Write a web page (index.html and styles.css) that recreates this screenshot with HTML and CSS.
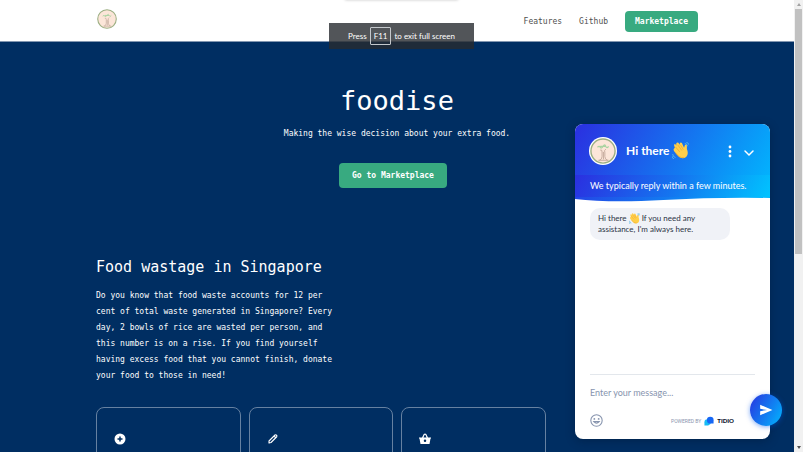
FILE: index.html
```html
<!DOCTYPE html>
<html lang="en">
<head>
<meta charset="utf-8">
<meta name="viewport" content="width=device-width, initial-scale=1">
<title>foodise</title>
<link rel="stylesheet" href="styles.css">
</head>
<body>
<svg class="defs" aria-hidden="true">
  <symbol id="logo" viewBox="0 0 28 28">
    <circle cx="14" cy="14" r="13" fill="#fce6d9" stroke="#9caf83" stroke-width="1.5"/>
    <path d="M8 10q2-2 3 0t3-1 3 0 3 0M11 9h6" fill="none" stroke="#a9d3a0" stroke-width="1.3"/>
    <path d="M11 13q2-1 2 2v5q0 3-3 4M17 12q-2 1-1 4v4q0 3 3 4M9 24h11M14.500 15v8" fill="none" stroke="#c4aa9c" stroke-width="1"/>
  </symbol>
  <symbol id="wave" viewBox="0 0 24 24">
    <path d="M4 8 3 5q-.5-2 1.500-2.200L6 5 6 2q1-2 3-1l2 3 0-2q1-2 3-.5L17 8l1-3q1-2 3-1l0 6q3 7-1 11-6 4-11-1L3 13q-2-3 1-5Z" fill="#ffcf4a"/>
    <path d="m5 7 6 7M8 4l6 8M12 4l4 7M5 15q5 8 12 7" fill="none" stroke="#eea52c" stroke-width="1"/>
    <path d="M18 2q3 0 4 4M20 0q3 1 4 4M1 17q0 4 4 5M0 20q0 3 3 4" fill="none" stroke="#55b5e8" stroke-width="1.3"/>
  </symbol>
</svg>
<div class="window">
  <div class="page">
    <header class="topbar">
      <div class="container topbar-row">
        <a href="#" class="brand" aria-label="foodise home"><svg><use href="#logo"/></svg></a>
        <nav class="nav">
          <a href="#features">Features</a>
          <a href="#github">Github</a>
          <a href="#market" class="btn">Marketplace</a>
        </nav>
      </div>
    </header>
    <main class="container">
      <section class="hero">
        <h1>foodise</h1>
        <p>Making the wise decision about your extra food.</p>
        <a href="#market" class="btn btn-hero">Go to Marketplace</a>
      </section>
      <section class="about" id="features">
        <h2>Food wastage in Singapore</h2>
        <p>Do you know that food waste accounts for 12 per cent of total waste generated in Singapore? Every day, 2 bowls of rice are wasted per person, and this number is on a rise. If you find yourself having excess food that you cannot finish, donate your food to those in need!</p>
        <div class="cards">
          <article class="card"><svg viewBox="0 0 24 24"><path fill="#fff" fill-rule="evenodd" d="M12 1a11 11 0 1 0 0 22 11 11 0 0 0 0-22Zm-1.500 6h3v3.500H17v3h-3.500V17h-3v-3.500H7v-3h3.500Z"/></svg></article>
          <article class="card"><svg viewBox="0 0 24 24"><path fill="none" stroke="#fff" stroke-width="2.200" stroke-linejoin="round" d="M4 20v-4L16 4q1.500-1 3 .5t.5 3L8 19ZM14 6l4 4"/></svg></article>
          <article class="card"><svg viewBox="0 0 24 24"><path fill="#fff" fill-rule="evenodd" d="M6 9 9.500 2q2.500-2 5 0L18 9h6v2h-1l-2 11H3L1 11H0V9Zm3 0h6l-2-5q-1-1-2 0Zm3 4a2.500 2.500 0 1 0 0 5 2.500 2.500 0 0 0 0-5Z"/></svg></article>
        </div>
      </section>
    </main>
  </div>
  <div class="scrollbar" aria-hidden="true"><i class="arrow up"></i><i class="thumb"></i><i class="arrow down"></i></div>
</div>
<div class="edge-shadow"></div>
<div class="toast" role="status">Press <kbd>F11</kbd> to exit full screen</div>
<aside class="chat" aria-label="Chat">
  <div class="chat-head">
    <div class="chat-title">
      <span class="avatar"><svg><use href="#logo"/></svg></span>
      <h3>Hi there <svg class="wave"><use href="#wave"/></svg></h3>
      <button type="button" aria-label="Options"><svg viewBox="0 0 16 16"><g fill="#fff"><circle cx="8" cy="4" r="1.400"/><circle cx="8" cy="8.500" r="1.400"/><circle cx="8" cy="13" r="1.400"/></g></svg></button>
      <button type="button" aria-label="Minimize"><svg viewBox="0 0 16 16"><path d="m4 8 4 4 4-4" fill="none" stroke="#fff" stroke-width="1.500" stroke-linecap="round"/></svg></button>
    </div>
    <p class="chat-note">We typically reply within a few minutes.</p>
    <svg class="curve" viewBox="0 0 194 6" preserveAspectRatio="none"><path d="M0 2q35 4 88 1T194 1v5H0Z" fill="#fff"/></svg>
  </div>
  <div class="chat-log">
    <p class="bubble">Hi there <svg class="wave"><use href="#wave"/></svg> If you need any<br>assistance, I'm always here.</p>
  </div>
  <form class="chat-form">
    <input type="text" aria-label="Message" placeholder="Enter your message...">
    <div class="chat-foot">
      <button type="button" aria-label="Emoji"><svg viewBox="0 0 24 24"><g fill="none" stroke="#8794ae" stroke-width="2"><circle cx="12" cy="12" r="10.500"/><path d="M7 14q5 6 10 0Z"/></g><g fill="#8794ae"><circle cx="8" cy="9" r="1.700"/><circle cx="16" cy="9" r="1.700"/></g></svg></button>
      <a href="#tidio" class="powered">POWERED BY <svg viewBox="0 0 24 24"><path d="M1 23V15q0-7 7-7h3q6 1 6 7t-7 8Z" fill="#18bcf5"/><path d="M7 10q0-8 8-8t8 8v8h-8q-8 0-8-8Z" fill="#1667f5"/></svg><strong>TIDIO</strong></a>
    </div>
    <button type="submit" class="send" aria-label="Send"><svg viewBox="0 0 24 24"><path fill="#fff" d="M2 3 23 12 2 21v-7l12-2-12-2Z"/></svg></button>
  </form>
</aside>
</body>
</html>
```
FILE: styles.css
```css
* { box-sizing: border-box; }
html, body { margin: 0; height: 100%; overflow: hidden; }
body { font-family: "DejaVu Sans Mono", monospace; font-size: 8px; color: #fff; background: #002e62; }
h1, h2, h3, p { margin: 0; font-weight: 400; }
a { color: inherit; text-decoration: none; }
svg { display: block; }
button { border: 0; padding: 0; background: none; cursor: pointer; }
.defs { position: absolute; width: 0; height: 0; }

.window { display: flex; height: 100%; }
.page { flex: 1; min-width: 0; overflow: hidden; }
.container { margin: 0 96px; }

.topbar { background: #fff; color: #505050; border-bottom: 1px solid #8296b0; }
.topbar-row { display: flex; justify-content: space-between; align-items: center; height: 41px; }
.brand { padding: 0 1px 4px; }
.brand svg { width: 20px; height: 20px; }
.nav { display: flex; align-items: center; gap: 17px; padding-top: 1px; }
.btn { display: inline-block; border-radius: 4px; background: #38aa80; color: #fff; font-weight: 700; line-height: 21px; padding: 0 10px; }
.btn-hero { line-height: 25px; padding: 0 13px; margin-right: 8px; }

.hero { text-align: center; padding-top: 39px; }
.hero h1 { font-size: 27px; line-height: 40px; }
.hero p { line-height: 16px; margin: 5px 0 21px; }
.about { padding-top: 67px; }
.about h2 { font-size: 15px; line-height: 24px; margin-bottom: 9px; }
.about p { width: 41%; line-height: 16px; }
.cards { display: grid; grid-template-columns: repeat(4, 1fr); gap: 8px; margin-top: 23px; }
.card { border: 1px solid #6681a1; border-radius: 8px; height: 140px; padding: 25px 17px; }
.card svg { width: 12px; height: 12px; }

.scrollbar { display: flex; flex-direction: column; align-items: center; width: 9px; background: #f1f1f1; padding: 3px 0; gap: 3px; }
.thumb { width: 7px; height: 55%; background: #c1c1c1; }
.arrow { border: 2px solid transparent; }
.up { border-top: 0; border-bottom: 3px solid #a3a3a3; }
.down { border-bottom: 0; border-top: 3px solid #505050; margin-top: auto; }

.edge-shadow { position: absolute; top: -6px; left: 43%; width: 14%; height: 6px; box-shadow: 0 0 3px rgba(0, 0, 0, .25); }
.toast { position: absolute; top: 23px; left: 41%; width: 18%; height: 26px; display: flex; align-items: center; justify-content: center; gap: 3px; background: rgba(39, 43, 48, .8); font-family: Lato, sans-serif; font-size: 8px; white-space: nowrap; }
.toast kbd { font: inherit; border: 1px solid #c4c8cc; border-radius: 1px; line-height: 16px; padding: 0 3px; }

.chat { position: absolute; right: 33px; bottom: 13px; top: 124px; width: 195px; display: flex; flex-direction: column; border-radius: 8px; background: #fff; color: #2a3245; font-family: Lato, sans-serif; box-shadow: 0 2px 10px rgba(0, 16, 40, .35); }
.chat-head { border-radius: 8px 8px 0 0; background: linear-gradient(120deg, #2b2fe0, #1573ef 50%, #00bbff); color: #fff; }
.chat-title { display: flex; align-items: center; height: 51px; padding: 2px 13px 0 14px; }
.avatar { width: 28px; height: 28px; border-radius: 50%; background: #fff; padding: 1px; margin-right: 9px; }
.avatar svg { width: 26px; height: 26px; }
.chat h3 { flex: 1; display: flex; align-items: center; gap: 3px; font-size: 12px; font-weight: 700; }
.chat h3 .wave { width: 17px; height: 17px; }
.chat-title button { margin-left: 3px; }
.chat-title button svg { width: 16px; height: 16px; }
.chat-note { font-size: 9px; line-height: 22px; padding: 0 15px; background: linear-gradient(120deg, #2b2fe0, #1573ef 50%, #00c4ff); }
.curve { width: 100%; height: 6px; }
.chat-log { flex: 1; padding: 5px 15px; }
.bubble { width: 85%; border-radius: 10px; padding: 5px 8px; background: #f0f2f7; font-size: 8px; line-height: 11px; }
.bubble .wave { display: inline-block; width: 11px; height: 11px; vertical-align: top; }
.chat-form { position: relative; margin: 0 15px; padding: 9px 0 12px; border-top: 1px solid #e3e7ec; }
.chat-form input { display: block; width: 100%; height: 16px; border: 0; padding: 0; outline: 0; font: 9px Lato, sans-serif; }
.chat-form input::placeholder { color: #8794ae; }
.chat-foot { display: flex; justify-content: space-between; align-items: center; margin-top: 14px; }
.chat-foot button svg { width: 13px; height: 13px; }
.powered { display: flex; align-items: center; gap: 3px; margin-right: 21px; color: #8794ae; font-family: Roboto, sans-serif; font-size: 5px; }
.powered svg { width: 10px; height: 10px; }
.powered strong { color: #081028; font-family: Lato, sans-serif; font-size: 6px; font-weight: 900; }
.send { position: absolute; right: -27px; bottom: 13px; width: 32px; height: 32px; border-radius: 50%; background: linear-gradient(120deg, #2833df, #00b8ff); box-shadow: 0 1px 5px rgba(0, 90, 240, .5); display: grid; place-items: center; }
.send svg { width: 14px; height: 14px; }
```
